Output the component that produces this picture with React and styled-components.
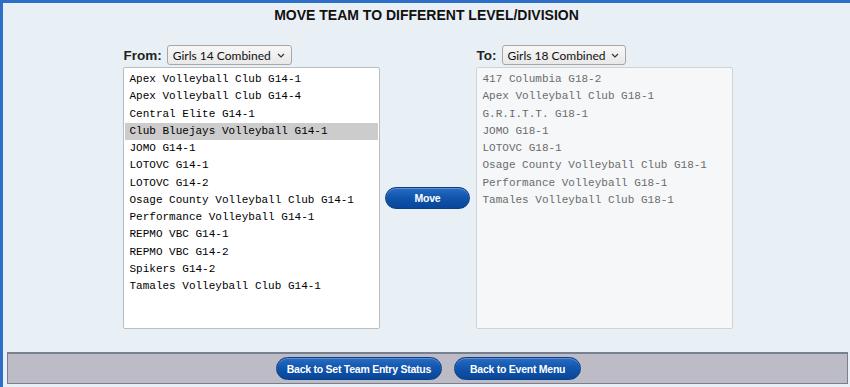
import React from "react";
import styled, { createGlobalStyle } from "styled-components";

const Global = createGlobalStyle`
  html, body { margin: 0; padding: 0; background: #e9f0f5; }
  body { font-family: "Liberation Sans", Arial, sans-serif; }
`;

const Page = styled.div`
  width: 850px;
  height: 387px;
  box-sizing: border-box;
  border-top: 3px solid #2d6ec6;
  border-left: 3px solid #2d6ec6;
  background: #e9f0f5;
  display: flex;
  flex-direction: column;
  overflow: hidden;
`;

const Title = styled.h1`
  margin: 0;
  padding-top: 4px;
  height: 19px;
  text-align: center;
  font-size: 14px;
  font-weight: bold;
  color: #111;
  line-height: 16px;
`;

const Main = styled.div`
  display: flex;
  justify-content: center;
  margin-top: 18px;
  padding-left: 2px;
`;

const Column = styled.div`
  width: 257px;
  display: flex;
  flex-direction: column;
`;

const Header = styled.div`
  display: flex;
  align-items: center;
  height: 22px;
  padding-left: ${(p) => p.$indent}px;
  margin-bottom: 1px;
`;

const Label = styled.span`
  font-size: 13.5px;
  font-weight: bold;
  color: #222;
  margin-right: 5px;
`;

const Dropdown = styled.div`
  display: flex;
  align-items: center;
  height: 20px;
  box-sizing: border-box;
  padding: 0 6px 0 5px;
  border: 1px solid #a8a8a8;
  border-radius: 3px;
  background: linear-gradient(#f7f7f7, #e8e8e8);
  font-family: Lato, "Noto Sans", sans-serif;
  font-size: 12px;
  color: #111;
  gap: 6px;
`;

const ListBox = styled.div`
  height: 262px;
  box-sizing: border-box;
  border: 1px solid ${(p) => (p.$disabled ? "#cfd3d6" : "#b9bec3")};
  background: ${(p) => (p.$disabled ? "#f5f7f9" : "#ffffff")};
  padding: 3px 1px;
  border-radius: 2px;
`;

const Item = styled.div`
  height: 17.25px;
  line-height: 17.25px;
  padding-left: 5px;
  font-family: "Liberation Mono", "DejaVu Sans Mono", monospace;
  font-size: 11px;
  white-space: pre;
  color: ${(p) => (p.$disabled ? "#6b6b6b" : "#000")};
  background: ${(p) => (p.$selected ? "#cccccc" : "transparent")};
`;

const Middle = styled.div`
  width: 96px;
  display: flex;
  justify-content: center;
  padding-top: 143px;
  box-sizing: border-box;
`;

const PillButton = styled.button`
  height: ${(p) => p.$h || 23}px;
  padding: 0 ${(p) => p.$px || 10}px;
  min-width: ${(p) => p.$w || 0}px;
  border-radius: 12px;
  border: 1px solid #0a3f88;
  background: linear-gradient(#2a6cc3 0%, #1256ad 45%, #08469a 100%);
  color: #fff;
  font-family: "Liberation Sans", Arial, sans-serif;
  font-weight: bold;
  font-size: 10.5px;
  letter-spacing: -0.25px;
  cursor: pointer;
  box-shadow: inset 0 1px 0 rgba(255, 255, 255, 0.25);
`;

const Footer = styled.div`
  margin: 23px 2px 0 4px;
  height: 32px;
  box-sizing: border-box;
  background: #bcbbc6;
  border: 1px solid #76808e;
  border-top-width: 2px;
  display: flex;
  justify-content: center;
  align-items: center;
  gap: 12px;
  padding-left: 2px;
`;

const fromTeams = [
  "Apex Volleyball Club G14-1",
  "Apex Volleyball Club G14-4",
  "Central Elite G14-1",
  "Club Bluejays Volleyball G14-1",
  "JOMO G14-1",
  "LOTOVC G14-1",
  "LOTOVC G14-2",
  "Osage County Volleyball Club G14-1",
  "Performance Volleyball G14-1",
  "REPMO VBC G14-1",
  "REPMO VBC G14-2",
  "Spikers G14-2",
  "Tamales Volleyball Club G14-1",
];

const toTeams = [
  "417 Columbia G18-2",
  "Apex Volleyball Club G18-1",
  "G.R.I.T.T. G18-1",
  "JOMO G18-1",
  "LOTOVC G18-1",
  "Osage County Volleyball Club G18-1",
  "Performance Volleyball G18-1",
  "Tamales Volleyball Club G18-1",
];

const Chevron = () => (
  <svg width="8" height="5" viewBox="0 0 8 5">
    <path d="M1 1 L4 4 L7 1" fill="none" stroke="#333" strokeWidth="1.2" />
  </svg>
);

export default function App() {
  return (
    <>
      <Global />
      <Page>
        <Title>MOVE TEAM TO DIFFERENT LEVEL/DIVISION</Title>
        <Main>
          <Column>
            <Header $indent={1}>
              <Label>From:</Label>
              <Dropdown>
                Girls 14 Combined <Chevron />
              </Dropdown>
            </Header>
            <ListBox>
              {fromTeams.map((t, i) => (
                <Item key={t} $selected={i === 3}>
                  {t}
                </Item>
              ))}
            </ListBox>
          </Column>
          <Middle>
            <PillButton $h={22} $w={85}>Move</PillButton>
          </Middle>
          <Column>
            <Header $indent={1}>
              <Label>To:</Label>
              <Dropdown>
                Girls 18 Combined <Chevron />
              </Dropdown>
            </Header>
            <ListBox $disabled>
              {toTeams.map((t) => (
                <Item key={t} $disabled>
                  {t}
                </Item>
              ))}
            </ListBox>
          </Column>
        </Main>
        <Footer>
          <PillButton>Back to Set Team Entry Status</PillButton>
          <PillButton $px={15}>Back to Event Menu</PillButton>
        </Footer>
      </Page>
    </>
  );
}
